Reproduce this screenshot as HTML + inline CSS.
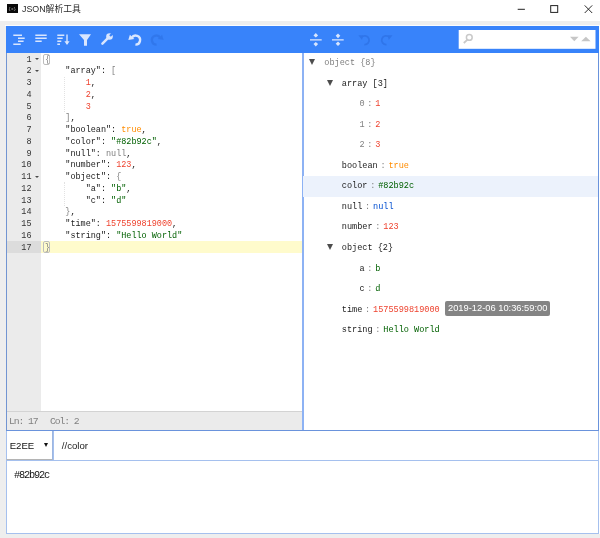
<!DOCTYPE html>
<html><head><meta charset="utf-8">
<style>
*{box-sizing:border-box;margin:0;padding:0}
html,body{width:600px;height:538px;overflow:hidden;background:#eeeeee}
body{position:relative;font-family:"Liberation Sans","Noto Sans CJK SC",sans-serif}
.abs{position:absolute}
#code,#tree,#ttext,#status span,#tag,#sel,#inp,#ta,#ticon{will-change:transform}
#title{left:0;top:0;width:600px;height:20.5px;background:#fff}
#wl{left:5px;top:25px;width:595px;height:1.3px;background:#fafcff}
#wr{left:598.5px;top:25px;width:1.5px;height:508.5px;background:#fdfeff}
#ticon{left:6.6px;top:4.1px;width:10.5px;height:9.3px;background:#0a0a0a;color:#bbb;font-size:4.4px;line-height:10.4px;text-align:center;font-family:"Liberation Mono",monospace}
#ttext{left:22px;top:2.5px;font-size:8.85px;line-height:13px;color:#2a2a2a;white-space:nowrap}
#main{left:6px;top:26px;width:592.8px;height:404.8px;background:#fff;border:1.1px solid #6a93dc;border-left-color:#7295d2}
#tb{left:6px;top:26.3px;width:592.7px;height:26.3px;background:#3883fa}
#mid{left:301.8px;top:52.5px;width:2.4px;height:377.5px;background:#8db2f4}
#gutter{left:7px;top:52.5px;width:34.2px;height:358.3px;background:#ebebeb}
#status{left:7px;top:410.8px;width:295px;height:19px;background:#ebebeb;border-top:1px solid #d3d3d3;color:#808080;font-family:"Liberation Mono",monospace;font-size:9.75px;letter-spacing:-1.12px;line-height:19.5px;white-space:pre}
.mono{font-family:"Liberation Mono",monospace;font-size:8.47px;white-space:pre}
.ln{left:7px;width:24.5px;text-align:right;color:#333;height:11.74px;line-height:11.74px}
.cl{left:45px;height:11.74px;line-height:11.74px;color:#1a1a1a}
.ig{left:64.3px;width:0;border-left:1px dotted #e2e2e2}
.bb{left:43.3px;width:6.8px;height:11.8px;border:1px solid #bdbdbd;border-radius:2px}
.s{color:#006000}.n{color:#ee422e}.b{color:#ff8c00}.g{color:#808080}.k{color:#1a1a1a}.nu{color:#004ed0}
#actl{left:41.2px;top:240.8px;width:260.8px;height:12px;background:#fffbcc}
#actg{left:7px;top:240.8px;width:34.2px;height:12px;background:#dcdcdc}
.tr{height:20.56px;line-height:20.56px;color:#1a1a1a;font-size:8.55px}
#hl{left:303.3px;top:176.3px;width:295px;height:20.4px;background:#ecf2fc}
#tag{left:445px;top:300.7px;height:15.3px;line-height:15.3px;padding:0 3px;background:#848484;color:#fff;font-size:9.32px;border-radius:2px;white-space:nowrap}
#sel{left:6px;top:430.5px;width:47px;height:29px;background:#fff;border:1px solid #b4b4b4;border-left-color:#a5c0ee;border-right-color:#9db6e0;border-top:none;font-size:9.6px;line-height:29px;padding-left:2.7px;color:#111}
#inp{left:52.5px;top:430.5px;width:546px;height:29.5px;background:#fff;border:1px solid #a5c0ee;border-top:none;font-size:9.65px;line-height:29px;padding-left:7.8px;color:#222}
#ta{left:6px;top:459.5px;width:592.5px;height:74px;background:#fff;border:1px solid #a5c0ee;font-family:"Liberation Mono",monospace;font-size:10.3px;letter-spacing:-1.18px;padding:7.2px 0 0 7px;color:#111;line-height:14px}
.fold{left:34.6px;width:0;height:0;border-left:2px solid transparent;border-right:2px solid transparent;border-top:2.6px solid #4a4a4a}
.tri{width:0;height:0;border-left:3.2px solid transparent;border-right:3.2px solid transparent;border-top:6px solid #4d4d4d}
.sep{color:#808080;padding:0 2.8px}
#code,#tree{position:absolute;left:0;top:0;width:600px;height:0}
</style></head><body>
<div id="title" class="abs"></div>
<div id="ticon" class="abs">{x}</div>
<div id="ttext" class="abs">JSON解析工具</div>
<svg class="abs" style="left:510px;top:0" width="90" height="21" viewBox="0 0 90 21">
<path d="M7.7 9.3h7.2" stroke="#222" stroke-width="1" fill="none"/>
<rect x="40.7" y="5.6" width="7" height="6.8" stroke="#222" stroke-width="1" fill="none"/>
<path d="M74.7 5.4l7.5 7.6M82.2 5.4l-7.5 7.6" stroke="#222" stroke-width="0.95" fill="none"/>
</svg>
<div id="wl" class="abs"></div><div id="wr" class="abs"></div>
<div id="main" class="abs"></div>
<div id="tb" class="abs"></div>
<svg class="abs" style="left:0;top:26px" width="600" height="27" viewBox="0 26 600 27">
<g stroke="#d9e6fe" stroke-width="1.4" fill="none">
<path d="M13.3 35.3H22M18 38.3H24.7M18 41.3H23.6M13.3 44.3H20.7"/>
<path d="M35.3 35.3H46.7M35.3 38.3H46.7M35.3 41.3H41.7"/>
<path d="M57.3 35.3H64.3M57.3 38.3H62.7M57.3 41.3H61.3M57.3 44.3H60"/>
<path d="M67 34.6V44"/>
</g>
<g fill="#d9e6fe">
<path d="M64.4 41.3H69.6L67 45z"/>
<path d="M79 34.3H91L87 40V45.7H84V40z"/>
<path d="M102.4 43.7L108.4 37.7" stroke="#d9e6fe" stroke-width="2.5" stroke-linecap="round"/><circle cx="109.5" cy="36.5" r="3.3"/><path d="M110 36l4-4" stroke="#3883fa" stroke-width="2.3"/>
</g>
<g id="undo" fill="none" stroke="#d9e6fe" stroke-width="2.4">
<path d="M131.7 37.85A4.5 4.5 0 1 1 135.4 44.6"/>
</g>
<path d="M128.3 40.1L129.9 34.8 134.3 38.9z" fill="#d9e6fe"/>
<g opacity="0.5">
<path d="M160.3 37.85A4.5 4.5 0 1 0 156.6 44.6" fill="none" stroke="#2a6de0" stroke-width="2.4"/>
<path d="M163.7 40.1L162.1 34.8 157.7 38.9z" fill="#2a6de0"/>
</g>
<g stroke="#d9e6fe" stroke-width="1.3" fill="none">
<path d="M310 39.8H321.7M332 39.8H343.7"/>
</g>
<g fill="#d9e6fe">
<path d="M315.8 33l2.3 2.6-2.3 1.9-2.3-1.9z"/>
<path d="M315.8 46.5l2.3-2.6-2.3-1.9-2.3 1.9z"/>
<path d="M338 38.2l2.3-2.4-2.3-2.2-2.3 2.2z"/>
<path d="M338 41.4l2.3 2.4-2.3 2.2-2.3-2.2z"/>
</g>
<g opacity="0.6">
<path d="M361.5 37.2a4.4 4.4 0 1 1 2.8 7.4" fill="none" stroke="#2a6de0" stroke-width="1.8"/>
<path d="M358.3 35.2l5 0.1-1.3 4.7z" fill="#2a6de0"/>
<path d="M389.3 37.2a4.4 4.4 0 1 0-2.8 7.4" fill="none" stroke="#2a6de0" stroke-width="1.8"/>
<path d="M392.5 35.2l-5 0.1 1.3 4.7z" fill="#2a6de0"/>
</g>
<rect x="458.7" y="30" width="136.8" height="18.8" fill="#fff"/>
<circle cx="469.3" cy="37.4" r="2.9" fill="none" stroke="#c9c9c9" stroke-width="1.5"/>
<path d="M467.2 39.8l-3.4 3.2" stroke="#c9c9c9" stroke-width="1.8" fill="none"/>
<path d="M570 36.8h8.6l-4.3 4.5z" fill="#c6c6c6"/>
<path d="M581.2 41.3h9.4l-4.7-4.6z" fill="#c6c6c6"/>
</svg>
<div id="mid" class="abs"></div>
<div id="gutter" class="abs"></div>
<div id="actg" class="abs"></div>
<div id="actl" class="abs"></div>
<div id="code">
<div class="abs mono ln" style="top:54.70px">1</div>
<div class="abs mono cl" style="top:54.70px"><span class="g">{</span></div>
<div class="abs mono ln" style="top:66.44px">2</div>
<div class="abs mono cl" style="top:66.44px">    <span class="k">"array"</span>: <span class="g">[</span></div>
<div class="abs mono ln" style="top:78.18px">3</div>
<div class="abs mono cl" style="top:78.18px">        <span class="n">1</span>,</div>
<div class="abs mono ln" style="top:89.92px">4</div>
<div class="abs mono cl" style="top:89.92px">        <span class="n">2</span>,</div>
<div class="abs mono ln" style="top:101.66px">5</div>
<div class="abs mono cl" style="top:101.66px">        <span class="n">3</span></div>
<div class="abs mono ln" style="top:113.40px">6</div>
<div class="abs mono cl" style="top:113.40px">    <span class="g">]</span>,</div>
<div class="abs mono ln" style="top:125.14px">7</div>
<div class="abs mono cl" style="top:125.14px">    <span class="k">"boolean"</span>: <span class="b">true</span>,</div>
<div class="abs mono ln" style="top:136.88px">8</div>
<div class="abs mono cl" style="top:136.88px">    <span class="k">"color"</span>: <span class="s">"#82b92c"</span>,</div>
<div class="abs mono ln" style="top:148.62px">9</div>
<div class="abs mono cl" style="top:148.62px">    <span class="k">"null"</span>: <span class="g">null</span>,</div>
<div class="abs mono ln" style="top:160.36px">10</div>
<div class="abs mono cl" style="top:160.36px">    <span class="k">"number"</span>: <span class="n">123</span>,</div>
<div class="abs mono ln" style="top:172.10px">11</div>
<div class="abs mono cl" style="top:172.10px">    <span class="k">"object"</span>: <span class="g">{</span></div>
<div class="abs mono ln" style="top:183.84px">12</div>
<div class="abs mono cl" style="top:183.84px">        <span class="k">"a"</span>: <span class="s">"b"</span>,</div>
<div class="abs mono ln" style="top:195.58px">13</div>
<div class="abs mono cl" style="top:195.58px">        <span class="k">"c"</span>: <span class="s">"d"</span></div>
<div class="abs mono ln" style="top:207.32px">14</div>
<div class="abs mono cl" style="top:207.32px">    <span class="g">}</span>,</div>
<div class="abs mono ln" style="top:219.06px">15</div>
<div class="abs mono cl" style="top:219.06px">    <span class="k">"time"</span>: <span class="n">1575599819000</span>,</div>
<div class="abs mono ln" style="top:230.80px">16</div>
<div class="abs mono cl" style="top:230.80px">    <span class="k">"string"</span>: <span class="s">"Hello World"</span></div>
<div class="abs mono ln" style="top:242.54px">17</div>
<div class="abs mono cl" style="top:242.54px"><span class="g">}</span></div>
<div class="abs fold" style="top:58.37px"></div>
<div class="abs fold" style="top:70.11px"></div>
<div class="abs fold" style="top:175.77px"></div>
<div class="abs ig" style="top:76.78px;height:35.22px"></div>
<div class="abs ig" style="top:182.44px;height:23.48px"></div>
<div class="abs bb" style="top:53.50px"></div>
<div class="abs bb" style="top:241.24px"></div>
</div><!--/code-->
<div id="status" class="abs"><span class="abs" style="left:2.4px">Ln: 17</span><span class="abs" style="left:42.7px">Col: 2</span></div>
<div id="hl" class="abs"></div>
<div id="tree">
<div class="abs tri" style="left:309.05px;top:58.95px"></div>
<div class="abs mono tr" style="left:324.25px;top:52.97px"><span class="g">object</span> <span class="g">{8}</span></div>
<div class="abs tri" style="left:326.55px;top:79.51px"></div>
<div class="abs mono tr" style="left:341.75px;top:73.53px"><span class="k">array</span> <span class="k">[3]</span></div>
<div class="abs mono tr" style="left:359.40px;top:94.09px"><span class="g">0</span><span class="sep">:</span><span class="n">1</span></div>
<div class="abs mono tr" style="left:359.40px;top:114.65px"><span class="g">1</span><span class="sep">:</span><span class="n">2</span></div>
<div class="abs mono tr" style="left:359.40px;top:135.21px"><span class="g">2</span><span class="sep">:</span><span class="n">3</span></div>
<div class="abs mono tr" style="left:341.75px;top:155.77px"><span class="k">boolean</span><span class="sep">:</span><span class="b">true</span></div>
<div class="abs mono tr" style="left:341.75px;top:176.33px"><span class="k">color</span><span class="sep">:</span><span class="s">#82b92c</span></div>
<div class="abs mono tr" style="left:341.75px;top:196.89px"><span class="k">null</span><span class="sep">:</span><span class="nu">null</span></div>
<div class="abs mono tr" style="left:341.75px;top:217.45px"><span class="k">number</span><span class="sep">:</span><span class="n">123</span></div>
<div class="abs tri" style="left:326.55px;top:243.99px"></div>
<div class="abs mono tr" style="left:341.75px;top:238.01px"><span class="k">object</span> <span class="k">{2}</span></div>
<div class="abs mono tr" style="left:359.40px;top:258.57px"><span class="k">a</span><span class="sep">:</span><span class="s">b</span></div>
<div class="abs mono tr" style="left:359.40px;top:279.13px"><span class="k">c</span><span class="sep">:</span><span class="s">d</span></div>
<div class="abs mono tr" style="left:341.75px;top:299.69px"><span class="k">time</span><span class="sep">:</span><span class="n">1575599819000</span></div>
<div class="abs mono tr" style="left:341.75px;top:320.25px"><span class="k">string</span><span class="sep">:</span><span class="s">Hello World</span></div>
</div><!--/tree-->
<div id="tag" class="abs">2019-12-06 10:36:59:00</div>
<div id="sel" class="abs">E2EE<span class="abs" style="left:37.2px;top:12.4px;width:0;height:0;border-left:2.3px solid transparent;border-right:2.3px solid transparent;border-top:4px solid #111"></span></div>
<div id="inp" class="abs">//color</div>
<div id="ta" class="abs">#82b92c</div>
</body></html>
